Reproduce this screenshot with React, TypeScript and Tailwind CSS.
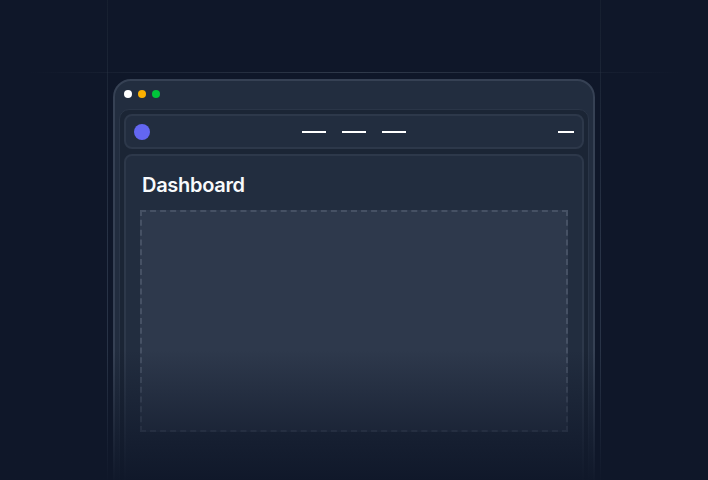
export default function App() {
  return (
    <div
      className="relative h-[480px] w-[708px] overflow-hidden bg-[#0f1729]"
      style={{ fontFamily: "Inter, 'Noto Sans', sans-serif" }}
    >
      {/* guide lines */}
      <div className="absolute left-[107px] top-0 h-full w-px bg-gradient-to-b from-[#161f2f] via-[#283346] to-[#283346]" />
      <div className="absolute left-[600px] top-0 h-full w-px bg-gradient-to-b from-[#161f2f] via-[#283346] to-[#283346]" />
      <div className="absolute left-[30px] top-[72px] h-px w-[650px] bg-gradient-to-r from-transparent via-[#303a4b] to-transparent" />

      {/* browser window */}
      <div className="ml-[113px] mt-[79px] h-[440px] w-[482px] rounded-t-[18px] border-2 border-[#364154] bg-[#222d3f] px-[4px] pt-[9px]">
        <div className="flex gap-[6px] pl-[5px]">
          <span className="h-2 w-2 rounded-full bg-white" />
          <span className="h-2 w-2 rounded-full bg-[#fbb000]" />
          <span className="h-2 w-2 rounded-full bg-[#00c43a]" />
        </div>

        <div className="mt-[11px] h-[400px] rounded-[10px] border border-[#2a3547] bg-[#1b2535] p-[4px]">
          {/* top bar */}
          <div className="grid h-[35px] grid-cols-[1fr_auto_1fr] items-center rounded-[8px] border-2 border-[#2d384a] bg-[#222d3f] px-[8px]">
            <span className="h-4 w-4 rounded-full bg-[#6366f1]" />
            <div className="flex gap-4">
              <span className="h-[2px] w-6 bg-white" />
              <span className="h-[2px] w-6 bg-white" />
              <span className="h-[2px] w-6 bg-white" />
            </div>
            <span className="h-[2px] w-4 justify-self-end bg-white" />
          </div>

          {/* content */}
          <div className="mt-[5px] h-[360px] rounded-[8px] border-2 border-[#2d384a] bg-[#222d3f] px-[14px] pt-[15px]">
            <h1 className="pl-[2px] text-[20px] leading-[28px] font-semibold tracking-[-0.3px] text-[#f8fafc]">
              Dashboard
            </h1>
            <div className="mt-[11px] h-[222px] w-[428px] border-2 border-dashed border-[#465164] bg-[#2e394c]" />
          </div>
        </div>
      </div>

      {/* bottom fade */}
      <div className="pointer-events-none absolute bottom-0 left-0 h-[130px] w-full bg-gradient-to-b from-transparent to-[#0f1729]/95" />
    </div>
  );
}
